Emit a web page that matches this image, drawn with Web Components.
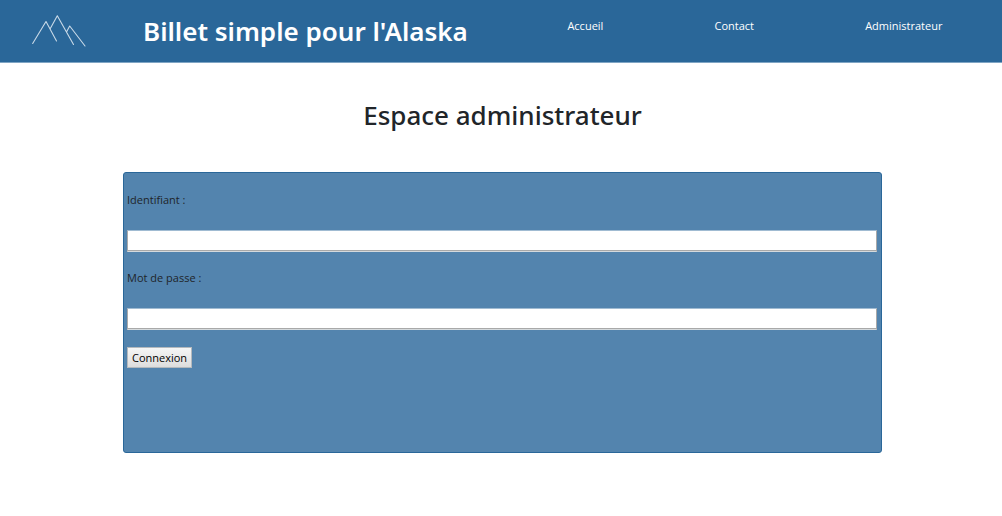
<!DOCTYPE html>
<html lang="fr">
<head>
<meta charset="utf-8">
<meta name="viewport" content="width=device-width, initial-scale=1">
<title>Billet simple pour l'Alaska</title>
<style>
body { margin: 0; background: #fff; color: #212529; font-family: "Open Sans", "Noto Sans", sans-serif; font-size: 11px; line-height: 17px; }
</style>
</head>
<body>
<site-header>
  <nav-link href="#accueil">Accueil</nav-link>
  <nav-link href="#contact">Contact</nav-link>
  <nav-link href="#admin">Administrateur</nav-link>
</site-header>
<admin-page>
  <login-form></login-form>
</admin-page>

<script>
function define(name, html) {
  customElements.define(name, class extends HTMLElement {
    constructor() {
      super();
      this.attachShadow({ mode: 'open' }).innerHTML = html;
    }
    connectedCallback() {
      const link = this.shadowRoot.querySelector('a[data-link]');
      if (link) link.href = this.getAttribute('href');
      const input = this.shadowRoot.querySelector('input');
      if (input && this.hasAttribute('type')) input.type = this.getAttribute('type');
    }
  });
}

define('mountain-logo', `
  <style>:host { display: block; } svg { display: block; }</style>
  <svg width="56" height="34" viewBox="0 0 56 34" fill="none" stroke="#c9dae8" stroke-width="1.1" stroke-linejoin="round" stroke-linecap="round" aria-hidden="true">
    <path d="M1.700 29.500 15 7.500 25.500 27M19.300 14.500 26.300 1.800 42.500 30.500M35.500 18 38.700 12 54 32"/>
  </svg>`);

define('nav-link', `
  <style>
    :host { display: block; }
    a { color: #fff; text-decoration: none; font-weight: 500; }
  </style>
  <a data-link><slot></slot></a>`);

define('site-header', `
  <style>
    :host { display: flex; align-items: flex-start; height: 62px; background: #2a6799; border-bottom: 1px solid #7fa5c4; color: #fff; }
    mountain-logo { margin: 14px 56px 0 31px; flex: none; }
    h1 { margin: 13px 44px 0 0; font-family: "Noto Sans", "Open Sans", sans-serif; font-size: 26px; line-height: 36px; font-weight: 600; white-space: nowrap; flex: none; }
    nav { flex: 1; display: flex; justify-content: space-around; margin: 17px 4px 0 0; }
  </style>
  <mountain-logo></mountain-logo>
  <h1>Billet simple pour l'Alaska</h1>
  <nav><slot></slot></nav>`);

define('admin-page', `
  <style>
    :host { display: block; }
    main { padding: 34px 120px 0 123px; }
    h2 { margin: 0 0 39px; font-family: "Noto Sans", "Open Sans", sans-serif; font-size: 26px; line-height: 36px; font-weight: 500; text-align: center; }
  </style>
  <main><h2>Espace administrateur</h2><slot></slot></main>`);

define('form-field', `
  <style>
    :host { display: block; }
    label { display: block; margin-bottom: 22px; }
    input { display: block; box-sizing: border-box; width: 100%; height: 22px; margin: 0; padding: 1px 4px; font: inherit; background: #fff; border: 1px solid #a9a9a9; border-top-color: #a0bbd2; border-bottom-color: #d5dadd; border-radius: 0; box-shadow: inset 0 -1px #a9a9a9; }
  </style>
  <label for="field"><slot></slot></label>
  <input id="field">`);

define('login-form', `
  <style>
    :host { display: block; }
    form { box-sizing: border-box; min-height: 281px; padding: 18px 4px 18px 3px; background: #5384ae; border: 1px solid #2a6799; border-radius: 3px; }
    form-field { margin-bottom: 17px; }
    button { display: block; height: 21px; margin: 0; padding: 0 4px; font: inherit; color: #000; border: 1px solid #b4b9bd; border-radius: 0; background: linear-gradient(#f6f6f6, #dddddd); }
  </style>
  <form>
    <form-field type="text">Identifiant :</form-field>
    <form-field type="password">Mot de passe :</form-field>
    <button type="button">Connexion</button>
  </form>`);
</script>
</body>
</html>
